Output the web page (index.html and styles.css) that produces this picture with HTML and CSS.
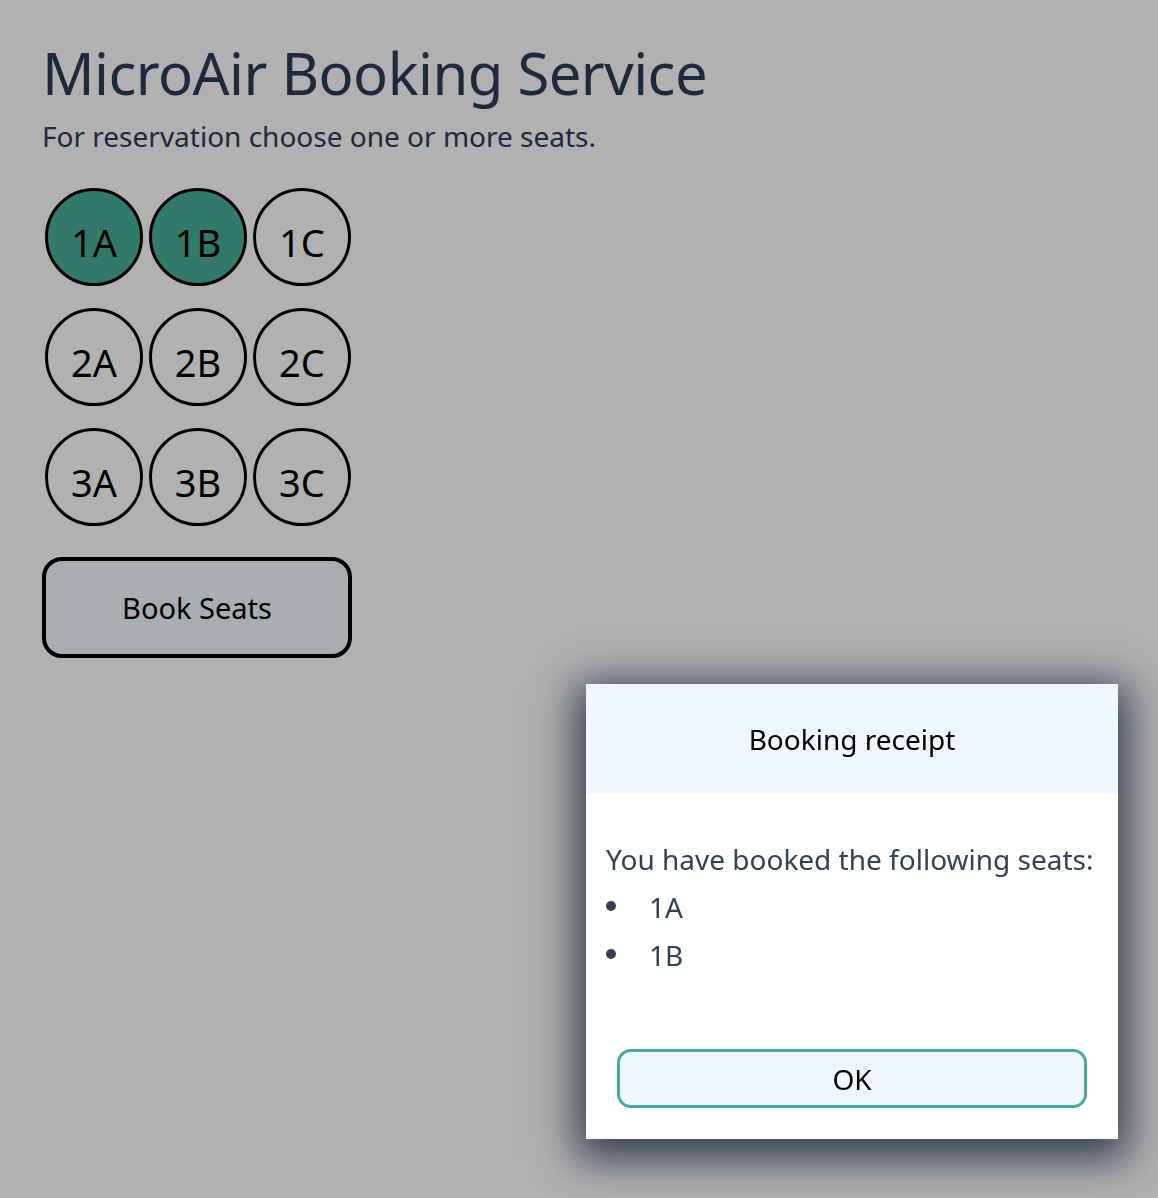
FILE: index.html
```html
<!DOCTYPE html>
<html lang="en">
<head>
<meta charset="utf-8">
<title>MicroAir Booking Service</title>
<link rel="stylesheet" href="styles.css">
</head>
<body>
<main class="page">
  <h1 class="title">MicroAir Booking Service</h1>
  <p class="subtitle">For reservation choose one or more seats.</p>
  <div class="seats">
    <button class="seat selected">1A</button>
    <button class="seat selected">1B</button>
    <button class="seat">1C</button>
    <button class="seat">2A</button>
    <button class="seat">2B</button>
    <button class="seat">2C</button>
    <button class="seat">3A</button>
    <button class="seat">3B</button>
    <button class="seat">3C</button>
  </div>
  <button class="book">Book Seats</button>
</main>
<div class="modal">
  <div class="modal-header">Booking receipt</div>
  <div class="modal-body">
    <p class="modal-text">You have booked the following seats:</p>
    <ul class="booked">
      <li class="booked-item">1A</li>
      <li class="booked-item">1B</li>
    </ul>
  </div>
  <div class="modal-footer">
    <button class="ok">OK</button>
  </div>
</div>
</body>
</html>
```
FILE: styles.css
```css
html, body {
  margin: 0;
  height: 100%;
}
body {
  background: #b1b1b1;
  font-family: "Noto Sans", "Open Sans", sans-serif;
  color: #1e293b;
}
.page {
  padding: 30px 42px;
}
.title {
  margin: 0;
  font-weight: 400;
  font-size: 58px;
  line-height: 86px;
  color: #1e293b;
  letter-spacing: -0.55px;
}
.subtitle {
  margin: 0 0 32px;
  font-size: 28px;
  line-height: 40px;
  color: #1e293b;
}
.seats {
  display: grid;
  grid-template-columns: repeat(3, 98px);
  column-gap: 6px;
  row-gap: 22px;
  padding-left: 3px;
}
.seat {
  width: 98px;
  height: 98px;
  border-radius: 50%;
  border: 3px solid #000;
  background: transparent;
  font-family: inherit;
  font-size: 38px;
  color: #000;
  padding: 9px 0 0 0;
  line-height: 1;
}
.seat.selected {
  background: #33796c;
}
.book {
  margin-top: 31px;
  width: 310px;
  height: 101px;
  border: 4px solid #000;
  border-radius: 20px;
  background: #a8adb1;
  font-family: inherit;
  font-size: 29px;
  color: #000;
}
.modal {
  position: fixed;
  right: 40px;
  bottom: 59px;
  width: 532px;
  height: 455px;
  background: #fff;
  display: flex;
  flex-direction: column;
  box-shadow: 0 10px 40px 10px rgba(30, 41, 59, 0.85);
}
.modal-header {
  height: 109px;
  background: #eff6ff;
  display: flex;
  align-items: center;
  justify-content: center;
  font-size: 28px;
  color: #000;
}
.modal-body {
  flex: 1;
  padding: 45px 20px 0;
  color: #334155;
}
.modal-text {
  margin: 0;
  font-size: 28px;
  line-height: 42px;
}
.booked {
  margin: 3px 0 0;
  padding: 0;
  list-style: none;
  font-size: 28px;
  line-height: 48px;
}
.booked-item {
  display: flex;
  align-items: center;
  gap: 33px;
}
.booked-item::before {
  content: "";
  width: 10px;
  height: 10px;
  border-radius: 50%;
  background: #334155;
  margin-top: -2px;
}
.modal-footer {
  padding: 0 31px 31px;
}
.ok {
  width: 100%;
  height: 59px;
  border: 3px solid #4aaa98;
  border-radius: 14px;
  background: #eff6ff;
  font-family: inherit;
  font-size: 28px;
  color: #000;
}
```
